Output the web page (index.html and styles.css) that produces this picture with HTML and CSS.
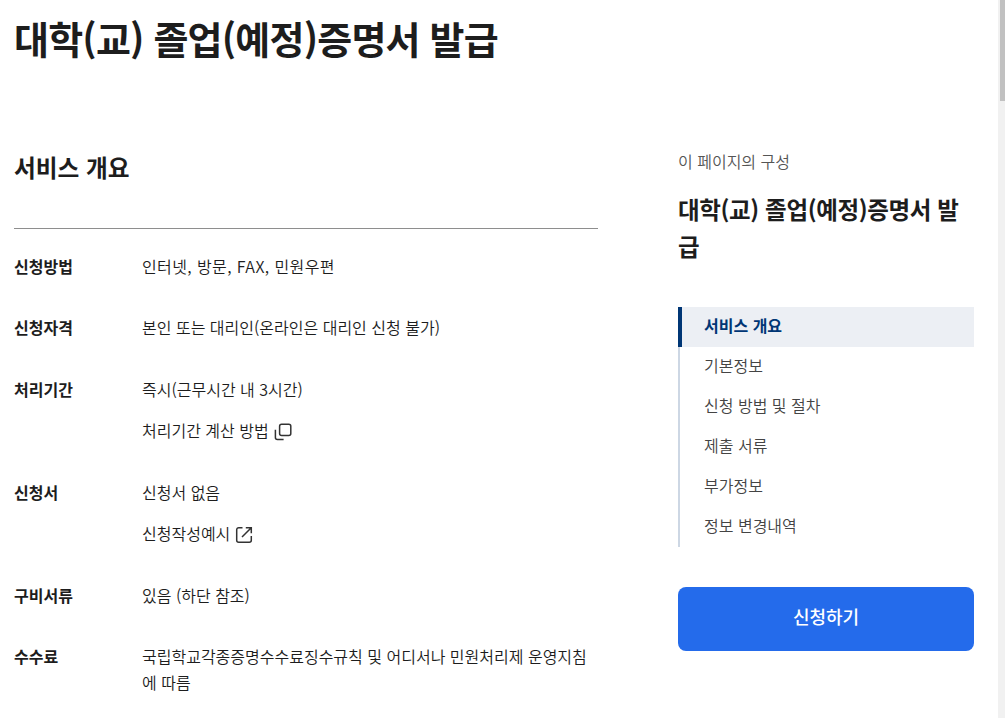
FILE: index.html
```html
<!DOCTYPE html>
<html lang="ko">
<head>
    <meta charset="UTF-8">
    <meta name="viewport" content="width=device-width, initial-scale=1.0">
    <title>대학(교) 졸업(예정)증명서 발급</title>
    <link rel="stylesheet" href="styles.css">
</head>
<body>

    <div class="page">
        <main class="container">
            <h1 class="page-title">대학(교) 졸업(예정)증명서 발급</h1>

            <div class="columns">
                <section class="overview">
                    <h2 class="section-title">서비스 개요</h2>
                    <dl class="info-list">
                        <div class="info-row">
                            <dt>신청방법</dt>
                            <dd><p class="methods">인터넷, 방문, FAX, 민원우편</p></dd>
                        </div>
                        <div class="info-row">
                            <dt>신청자격</dt>
                            <dd><p>본인 또는 대리인(온라인은 대리인 신청 불가)</p></dd>
                        </div>
                        <div class="info-row">
                            <dt>처리기간</dt>
                            <dd>
                                <p>즉시(근무시간 내 3시간)</p>
                                <a class="link" href="#">처리기간 계산 방법
                                    <svg class="icon" viewBox="0 0 20 20">
                                        <rect x="6.6" y="2.2" width="11.2" height="11.2" rx="2"/>
                                        <path d="M2.4 7.8v7.8a2 2 0 0 0 2 2h6.2"/>
                                    </svg>
                                </a>
                            </dd>
                        </div>
                        <div class="info-row">
                            <dt>신청서</dt>
                            <dd>
                                <p>신청서 없음</p>
                                <a class="link" href="#">신청작성예시
                                    <svg class="icon" viewBox="0 0 20 20">
                                        <path d="M8.5 2.7H4.7a2 2 0 0 0-2 2v10.6a2 2 0 0 0 2 2h10.6a2 2 0 0 0 2-2V11"/>
                                        <path d="M11.8 2.7h5.5v5.5M17 3L8 12"/>
                                    </svg>
                                </a>
                            </dd>
                        </div>
                        <div class="info-row">
                            <dt>구비서류</dt>
                            <dd><p>있음 (하단 참조)</p></dd>
                        </div>
                        <div class="info-row">
                            <dt>수수료</dt>
                            <dd><p>국립학교각종증명수수료징수규칙 및 어디서나 민원처리제 운영지침에 따름</p></dd>
                        </div>
                    </dl>
                </section>

                <aside class="side">
                    <p class="side-label">이 페이지의 구성</p>
                    <h2 class="side-title">대학(교) 졸업(예정)증명서 발급</h2>
                    <nav class="side-nav">
                        <a class="active" href="#">서비스 개요</a>
                        <a href="#">기본정보</a>
                        <a href="#">신청 방법 및 절차</a>
                        <a href="#">제출 서류</a>
                        <a href="#">부가정보</a>
                        <a href="#">정보 변경내역</a>
                    </nav>
                    <button class="apply-btn" type="button">신청하기</button>
                </aside>
            </div>
        </main>

        <div class="scrollbar"><div class="thumb"></div></div>
    </div>

</body>
</html>
```
FILE: styles.css
```css
* {
    box-sizing: border-box;
    margin: 0;
    padding: 0;
}

body {
    font-family: "Noto Sans CJK KR", sans-serif;
    font-size: 16px;
    line-height: 25.5px;
    color: #1d1d1d;
    background-color: #fff;
    overflow: hidden;
}

a {
    color: inherit;
    text-decoration: none;
}

.page {
    display: flex;
    height: 718px;
    overflow: hidden;
}

.container {
    flex: 1;
    padding: 8px 24px 0 14px;
}

.page-title {
    font-size: 38px;
    line-height: 60px;
    font-weight: 700;
    letter-spacing: -0.8px;
}

/* Content and side menu */
.columns {
    display: flex;
    gap: 80px;
    padding-top: 81px;
}

.overview {
    width: 584px;
}

.section-title {
    height: 80px;
    font-size: 23.7px;
    line-height: 36px;
    font-weight: 700;
    border-bottom: 1px solid #8e8e8e;
}

.info-list {
    display: flex;
    flex-direction: column;
    gap: 36px;
    padding-top: 24.8px;
}

.info-row {
    display: flex;
}

.info-row dt {
    width: 128px;
    font-weight: 700;
}

.info-row dd {
    display: flex;
    flex: 1;
    flex-direction: column;
    gap: 16px;
    font-weight: 350;
}

.methods {
    letter-spacing: 0.4px;
}

.link {
    display: flex;
    align-items: center;
    gap: 4px;
}

.icon {
    width: 20px;
    height: 20px;
    margin-top: 1px;
    fill: none;
    stroke: #333;
    stroke-width: 1.5;
}

/* Side menu */
.side {
    width: 296px;
}

.side-label {
    font-weight: 350;
    color: #555;
}

.side-title {
    margin-top: 16px;
    font-size: 23.5px;
    line-height: 37px;
    font-weight: 700;
    letter-spacing: -0.35px;
}

.side-nav {
    display: flex;
    flex-direction: column;
    margin-top: 42px;
}

.side-nav a {
    height: 40px;
    padding-left: 24px;
    line-height: 36px;
    font-weight: 350;
    color: #444;
    border-left: 2px solid #cdd7e4;
}

.side-nav .active {
    padding-left: 22px;
    font-weight: 700;
    color: #003675;
    background-color: #eceff4;
    border-left: 4px solid #003675;
}

.apply-btn {
    width: 100%;
    height: 64px;
    margin-top: 40px;
    padding-bottom: 5px;
    font-family: inherit;
    font-size: 18px;
    font-weight: 500;
    color: #fff;
    background-color: #246beb;
    border: none;
    border-radius: 8px;
}

/* Scrollbar */
.scrollbar {
    width: 7px;
    padding-left: 2px;
    background-color: #f1f1f1;
}

.thumb {
    height: 101px;
    background-color: #c1c1c1;
}
```
